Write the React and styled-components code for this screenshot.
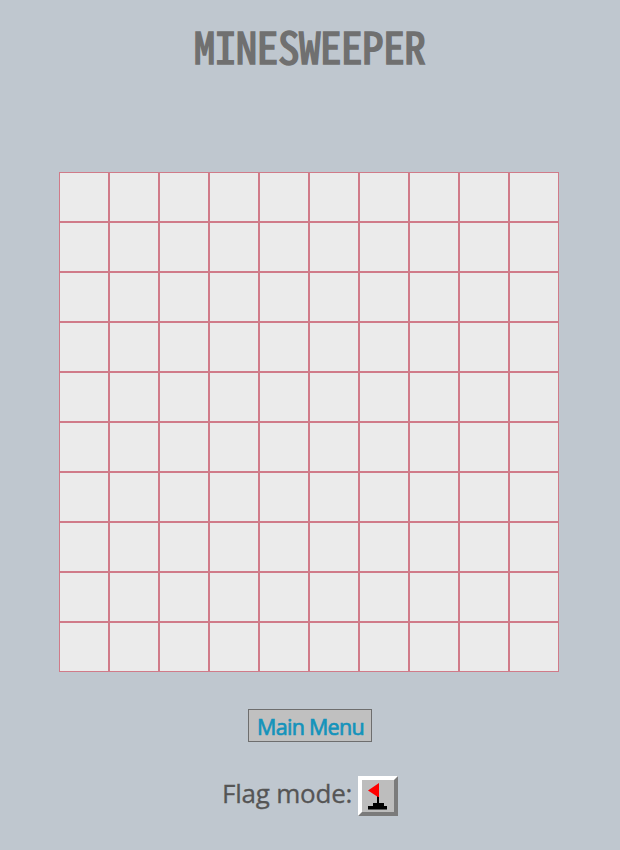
import React, { useState } from "react";
import styled, { createGlobalStyle } from "styled-components";

const GlobalStyle = createGlobalStyle`
  *, *::before, *::after { box-sizing: border-box; }
  body { margin: 0; background: #bfc7cf; }
`;

const Page = styled.main`
  display: flex;
  flex-direction: column;
  align-items: center;
  width: 620px;
  height: 850px;
  background: #bfc7cf;
  overflow: hidden;
`;

const Title = styled.h1`
  margin: 15px 1px 0 0;
  height: 60px;
  font: 400 43px/60px "Noto Sans CJK JP", monospace;
  font-feature-settings: "hwid" 1;
  letter-spacing: -0.45px;
  white-space: nowrap;
  color: #707070;
  -webkit-text-stroke: 1.6px #707070;
`;

const Board = styled.div`
  display: grid;
  grid-template-columns: repeat(10, 50px);
  grid-auto-rows: 50px;
  margin: 97px 2px 0 0;
`;

const Cell = styled.div`
  background: #ebebeb;
  border: 1px solid #d07b89;
`;

const MenuButton = styled.button`
  width: 124px;
  height: 33px;
  margin-top: 37px;
  padding: 2px 0 0 1px;
  border: 1px solid #6e6e6e;
  background: #c0c0c0;
  color: #1493bb;
  font: 400 21.5px/29px "Open Sans", sans-serif;
  letter-spacing: -0.72px;
  white-space: nowrap;
  -webkit-text-stroke: 0.7px #1493bb;
`;

const FlagRow = styled.div`
  display: flex;
  align-items: flex-start;
  gap: 6px;
  width: 176px;
  height: 40px;
  margin-top: 34px;
`;

const FlagLabel = styled.span`
  width: 130px;
  font: 400 26px/34px "Open Sans", sans-serif;
  letter-spacing: -0.22px;
  white-space: nowrap;
  color: #555;
  -webkit-text-stroke: 0.3px #555;
`;

const FlagButton = styled.button`
  display: flex;
  width: 40px;
  height: 40px;
  padding: 0;
  border: 4px solid;
  border-color: #fff #7b7b7b #7b7b7b #fff;
  background: #bdbdbd;
`;

function FlagIcon() {
  return (
    <svg width="32" height="32" viewBox="0 0 32 32">
      <path d="M15 16h2v7h5v3h3v3.5H6V26h5v-3h4z" fill="#000" />
      <path d="M17 3v14h-1L6 10.5z" fill="#f00" />
    </svg>
  );
}

export default function App() {
  const [flagMode, setFlagMode] = useState(false);
  return (
    <>
      <GlobalStyle />
      <Page>
        <Title>MINESWEEPER</Title>
        <Board>
          {Array.from({ length: 100 }, (_, i) => (
            <Cell key={i} />
          ))}
        </Board>
        <MenuButton>Main Menu</MenuButton>
        <FlagRow>
          <FlagLabel>Flag mode:</FlagLabel>
          <FlagButton aria-pressed={flagMode} onClick={() => setFlagMode(!flagMode)}>
            <FlagIcon />
          </FlagButton>
        </FlagRow>
      </Page>
    </>
  );
}
